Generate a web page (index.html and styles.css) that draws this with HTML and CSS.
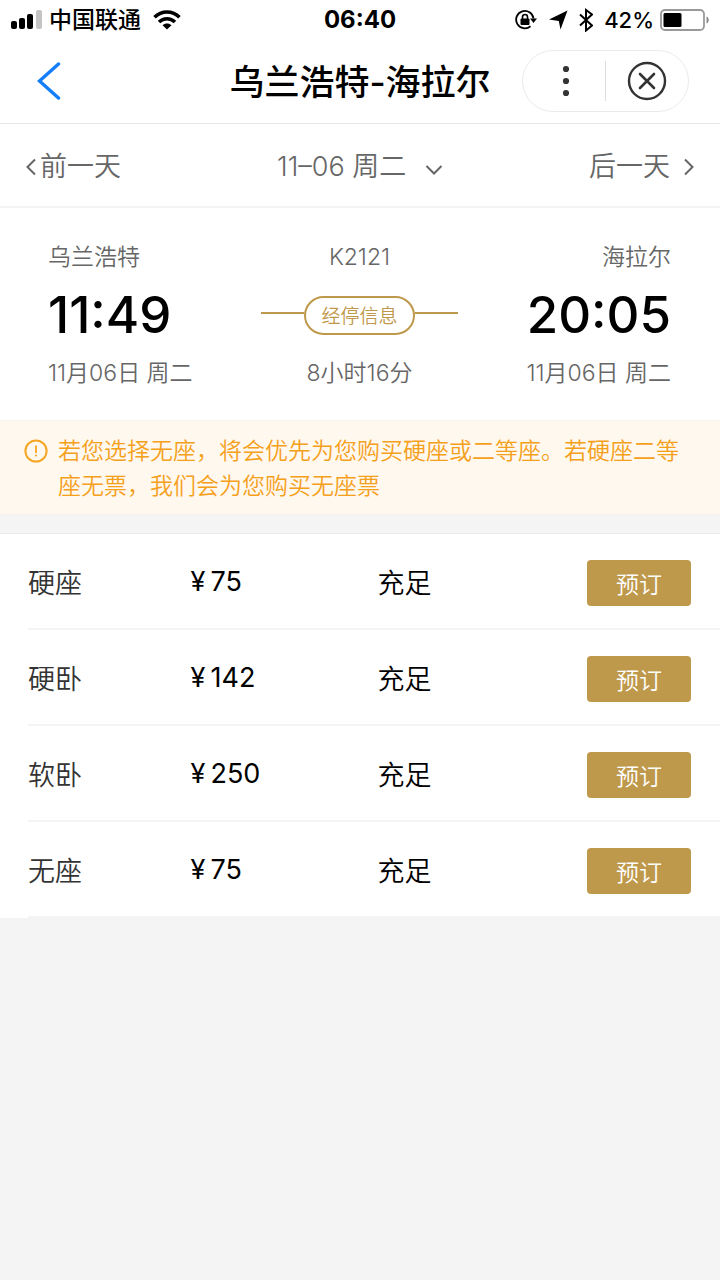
FILE: index.html
```html
<!DOCTYPE html>
<html lang="zh-CN">
<head>
  <meta charset="UTF-8">
  <meta name="viewport" content="width=device-width, initial-scale=1.0">
  <title>乌兰浩特-海拉尔</title>
  <link rel="stylesheet" href="styles.css">
</head>
<body>
  <div class="status-bar">
    <div class="status-left">
      <svg class="signal" width="32" height="20" viewBox="0 0 32 20">
        <rect x="1" y="11" width="6" height="8" rx="2"/>
        <rect x="9" y="8" width="6" height="11" rx="2"/>
        <rect x="17" y="4" width="6" height="15" rx="2"/>
        <rect x="26" y="0" width="6" height="19" rx="2" fill="#c4c4c4"/>
      </svg>
      <span class="carrier">中国联通</span>
      <svg class="wifi" width="28" height="20" viewBox="0 0 28 20">
        <g fill="none" stroke="#000" stroke-width="3.6">
          <path d="M1.500 7.200C8.500.2 19.500.2 26.500 7.200"/>
          <path d="M6 12c4.600-4.400 11.400-4.400 16 0"/>
        </g>
        <path d="M9.500 15.200c2.700-2.200 6.300-2.200 9 0L14 19.500z"/>
      </svg>
    </div>
    <span class="clock">06:40</span>
    <div class="status-right">
      <svg width="22" height="22" viewBox="0 0 22 22">
        <path d="M15.500 17.200A8.700 8.700 0 1 1 18.500 9.500" fill="none" stroke="#000" stroke-width="1.800"/>
        <path d="M15 9.500h7l-3.500 4.500z"/>
        <rect x="5.500" y="9.500" width="9" height="6.500" rx="1"/>
        <path d="M7.500 10V8a2.500 2.500 0 0 1 5 0v2" fill="none" stroke="#000" stroke-width="1.600"/>
      </svg>
      <svg width="20" height="20" viewBox="0 0 20 20">
        <path d="M19.500.5L12.500 19.500 10.800 11 1 9.500z"/>
      </svg>
      <svg width="14" height="24" viewBox="0 0 14 24">
        <path d="M1 6.500l12 11-6 5V2l6 4.500-12 11" fill="none" stroke="#000" stroke-width="2"/>
      </svg>
      <span class="percent">42%</span>
      <svg width="50" height="22" viewBox="0 0 50 22">
        <rect x="1" y="1" width="43" height="20" rx="4" fill="none" stroke="#999" stroke-width="1.800"/>
        <rect x="3.500" y="4" width="18" height="14" rx="1.500"/>
        <path d="M46.500 7.500c3 1 3 6 0 7z" fill="#888"/>
      </svg>
    </div>
  </div>

  <header class="header">
    <button class="back" aria-label="返回">
      <svg width="24" height="38" viewBox="0 0 24 38">
        <path d="M21.500 2L2.500 19l19 17" fill="none" stroke="#147efb" stroke-width="3.400" stroke-linecap="round"/>
      </svg>
    </button>
    <h1 class="title">乌兰浩特-海拉尔</h1>
    <div class="capsule">
      <button class="capsule-button" aria-label="更多">
        <svg width="40" height="40" viewBox="0 0 40 40" fill="#333">
          <circle cx="22" cy="8" r="3.100"/>
          <circle cx="22" cy="20" r="3.100"/>
          <circle cx="22" cy="32" r="3.100"/>
        </svg>
      </button>
      <button class="capsule-button" aria-label="关闭">
        <svg width="40" height="40" viewBox="0 0 40 40" fill="none" stroke="#333" stroke-linecap="round">
          <circle cx="20" cy="20" r="18" stroke-width="2.400"/>
          <path d="M13 13l14 14M27 13L13 27" stroke-width="2.600"/>
        </svg>
      </button>
    </div>
  </header>

  <nav class="date-nav">
    <button class="day prev">
      <svg width="10" height="18" viewBox="0 0 10 18"><path d="M9 1.500L1.500 9 9 16.500"/></svg>
      前一天
    </button>
    <label class="date-picker">
      <select class="date-select" aria-label="出发日期">
        <option>11–06 周二</option>
      </select>
      <svg class="arrow-down" width="18" height="10" viewBox="0 0 18 10"><path d="M1.500 1L9 8.500 16.500 1"/></svg>
    </label>
    <button class="day next">
      后一天
      <svg width="10" height="18" viewBox="0 0 10 18"><path d="M1 1.500L8.500 9 1 16.500"/></svg>
    </button>
  </nav>

  <main>
    <section class="trip">
      <div class="stop">
        <span class="label">乌兰浩特</span>
        <span class="time">11:49</span>
        <span class="label">11月06日 周二</span>
      </div>
      <div class="train">
        <span class="label">K2121</span>
        <div class="route">
          <button class="route-info">经停信息</button>
        </div>
        <span class="label">8小时16分</span>
      </div>
      <div class="stop arrive">
        <span class="label">海拉尔</span>
        <span class="time">20:05</span>
        <span class="label">11月06日 周二</span>
      </div>
    </section>

    <div class="notice">
      <svg class="notice-icon" width="24" height="24" viewBox="0 0 24 24">
        <circle cx="12" cy="12" r="10.600" fill="none" stroke="#f5a623" stroke-width="2"/>
        <path d="M12 6.500v7.500" stroke="#f5a623" stroke-width="1.800"/>
        <circle cx="12" cy="16.500" r="1.100" fill="#f5a623"/>
      </svg>
      <p class="notice-text">若您选择无座，将会优先为您购买硬座或二等座。若硬座二等座无票，我们会为您购买无座票</p>
    </div>

    <div class="seats">
      <table class="seat-table">
        <tbody>
          <tr>
            <th class="seat" scope="row">硬座</th>
            <td class="price"><span class="yen">¥</span>75</td>
            <td class="stock">充足</td>
            <td class="action"><button class="book">预订</button></td>
          </tr>
          <tr>
            <th class="seat" scope="row">硬卧</th>
            <td class="price"><span class="yen">¥</span>142</td>
            <td class="stock">充足</td>
            <td class="action"><button class="book">预订</button></td>
          </tr>
          <tr>
            <th class="seat" scope="row">软卧</th>
            <td class="price"><span class="yen">¥</span>250</td>
            <td class="stock">充足</td>
            <td class="action"><button class="book">预订</button></td>
          </tr>
          <tr>
            <th class="seat" scope="row">无座</th>
            <td class="price"><span class="yen">¥</span>75</td>
            <td class="stock">充足</td>
            <td class="action"><button class="book">预订</button></td>
          </tr>
        </tbody>
      </table>
    </div>
  </main>
</body>
</html>
```
FILE: styles.css
```css
* {
  box-sizing: border-box;
}

body {
  margin: 0;
  background-color: #f4f4f4;
  color: #000;
  font-family: Inter, "Noto Sans CJK SC", sans-serif;
  font-weight: 350;
}

button,
select {
  margin: 0;
  padding: 0;
  border: none;
  background: none;
  color: inherit;
  font: inherit;
  cursor: pointer;
}

svg {
  display: block;
  flex-shrink: 0;
}

/* Status bar */
.status-bar {
  display: grid;
  grid-template-columns: 1fr auto 1fr;
  align-items: center;
  height: 40px;
  padding: 0 10px;
  background-color: #fff;
  font-size: 23px;
  line-height: 40px;
}

.status-left,
.status-right {
  display: flex;
  align-items: center;
}

.status-left {
  gap: 7px;
}

.wifi {
  margin-left: 5px;
}

.clock {
  font-size: 24px;
  font-weight: 700;
}

.carrier,
.percent {
  font-weight: 500;
}

.status-right {
  justify-content: flex-end;
  gap: 11px;
}

.percent {
  margin-right: -5px;
  font-size: 22px;
}

/* Header */
.header {
  display: grid;
  grid-template-columns: 1fr auto 1fr;
  align-items: center;
  height: 84px;
  padding: 0 31px 2px;
  border-bottom: 1px solid #e8e8e8;
  background-color: #fff;
}

.back {
  justify-self: start;
  padding-left: 6px;
}

.title {
  margin: 0;
  padding-top: 2px;
  font-size: 35px;
  font-weight: 500;
  line-height: 48px;
}

.capsule {
  display: flex;
  justify-self: end;
  align-items: center;
  width: 167px;
  height: 62px;
  border: 1px solid #ebebeb;
  border-radius: 31px;
}

.capsule-button {
  display: flex;
  flex: 1;
  justify-content: center;
}

.capsule-button + .capsule-button {
  border-left: 1px solid #ddd;
}

/* Date switcher */
.date-nav {
  display: grid;
  grid-template-columns: 1fr auto 1fr;
  align-items: center;
  height: 84px;
  padding: 4px 26px 0;
  border-bottom: 2px solid #f4f4f4;
  background-color: #fff;
  color: #666;
  font-size: 27px;
  line-height: 40px;
}

.date-nav svg {
  fill: none;
  stroke: #666;
  stroke-width: 2;
}

.day {
  display: flex;
  align-items: center;
  gap: 4px;
}

.next {
  justify-self: end;
  gap: 14px;
}

.date-picker {
  display: flex;
  align-items: center;
  gap: 18px;
}

.date-select {
  appearance: none;
}

.arrow-down {
  margin-top: 6px;
}

/* Trip summary */
.trip {
  display: grid;
  grid-template-columns: 1fr auto 1fr;
  padding: 32px 49px 30px 48px;
  background-color: #fff;
}

.stop,
.train {
  display: flex;
  flex-direction: column;
  gap: 14px;
}

.train {
  align-items: center;
}

.arrive {
  align-items: flex-end;
}

.label {
  color: #666;
  font-size: 23px;
  line-height: 34px;
}

.time {
  font-size: 51px;
  font-weight: 500;
  line-height: 54px;
}

.route {
  display: flex;
  align-items: center;
  height: 54px;
}

.route::before,
.route::after {
  content: "";
  width: 43px;
  height: 2px;
  margin-bottom: 4px;
  background-color: #bf994b;
}

.route-info {
  height: 39px;
  padding: 0 15px 2px;
  border: 2px solid #bf994b;
  border-radius: 20px;
  color: #bf994b;
  font-size: 19px;
}

/* Notice */
.notice {
  display: flex;
  gap: 10px;
  padding: 13px 24px 10px;
  border-top: 1px solid #f8f2ea;
  border-bottom: 1px solid #f5f0ea;
  background-color: #fff8ee;
}

.notice-icon {
  margin-top: 5px;
}

.notice-text {
  margin: 0;
  color: #f5a01b;
  font-size: 23px;
  line-height: 35px;
}

/* Seats */
.seats {
  margin-top: 18px;
  padding-left: 28px;
  border-top: 1px solid #ececec;
  background-color: #fff;
}

.seat-table {
  width: 100%;
  border-collapse: separate;
  border-spacing: 0;
  table-layout: fixed;
  font-size: 27px;
}

.seat-table th,
.seat-table td {
  height: 96px;
  padding: 0;
  border-bottom: 2px solid #f4f4f4;
  text-align: left;
}

.seat-table .seat {
  width: 23.5%;
  color: #333;
  font-weight: inherit;
}

.price {
  width: 27%;
  font-weight: 400;
}

.yen {
  margin-right: 5px;
}

.seat-table .action {
  padding: 4px 29px 0 0;
  text-align: right;
}

.book {
  width: 104px;
  height: 46px;
  border-radius: 4px;
  background-color: #bf994b;
  color: #fff;
  font-size: 23px;
  vertical-align: middle;
}

.book:hover {
  background-color: #ad8a42;
}
```
